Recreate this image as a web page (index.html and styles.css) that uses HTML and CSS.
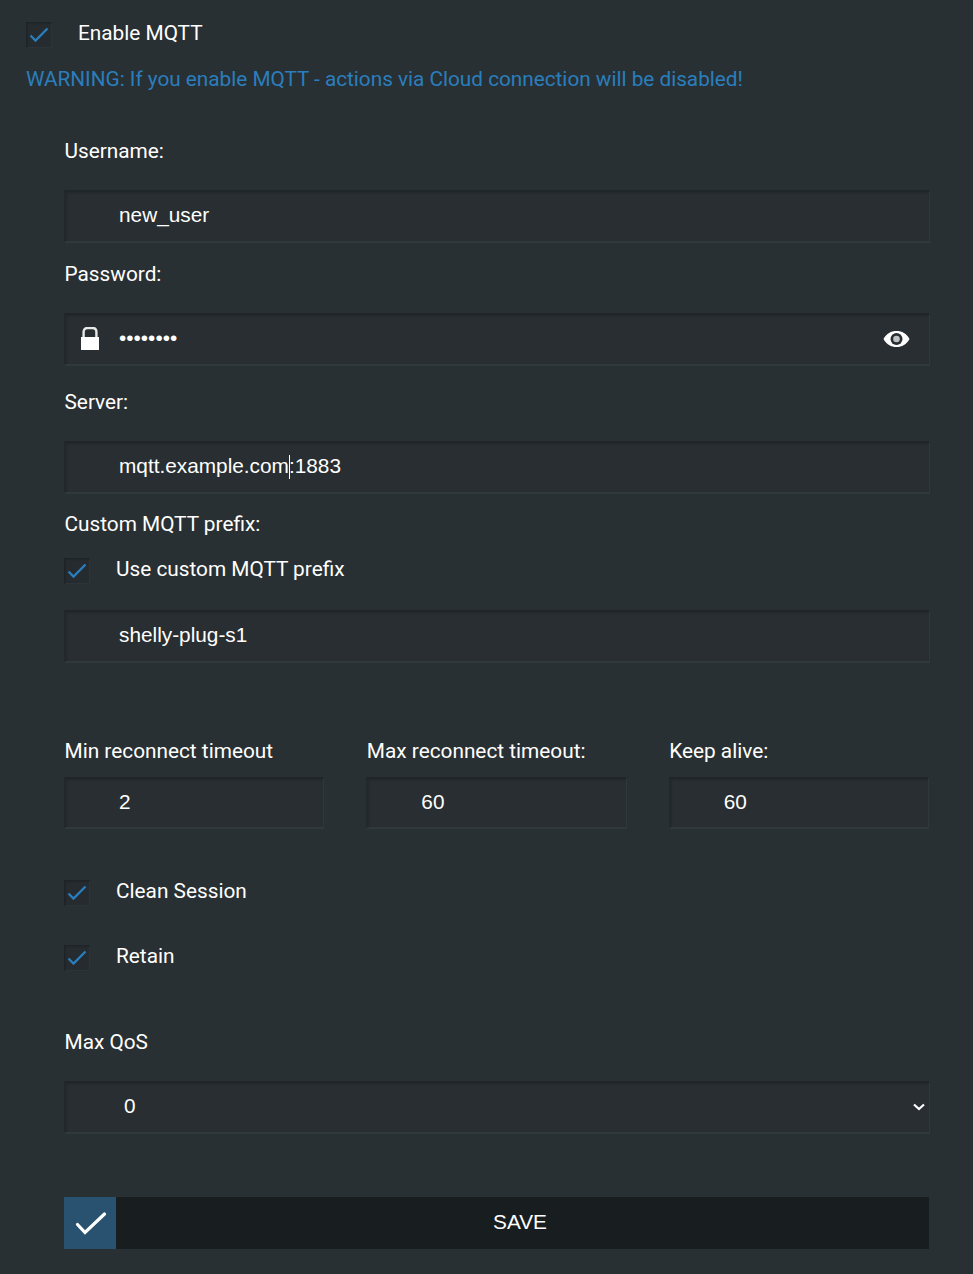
FILE: index.html
```html
<!DOCTYPE html>
<html lang="en">
<head>
<meta charset="utf-8">
<title>MQTT</title>
<link rel="stylesheet" href="styles.css">
</head>
<body>
<svg class="defs" width="0" height="0" aria-hidden="true">
  <symbol id="tick" viewBox="0 0 26 26"><path d="M4.500 13.500 L9.500 18.500 L21.500 6.500" fill="none" stroke="#2a7ebd" stroke-width="2.300"/></symbol>
</svg>
<main class="page">
  <div class="check-row top">
    <span class="box"><svg width="26" height="26"><use href="#tick"/></svg></span>
    <span class="check-text">Enable MQTT</span>
  </div>
  <p class="warning">WARNING: If you enable MQTT - actions via Cloud connection will be disabled!</p>

  <form class="form">
    <div class="label first">Username:</div>
    <div class="field"><span class="value">new_user</span></div>

    <div class="label l-pass">Password:</div>
    <div class="field">
      <svg class="lock" width="20" height="24" viewBox="0 0 20 24"><path d="M3.600 11V5C3.600 2.500 5 1 7.500 1H12.500C15 1 16.400 2.500 16.400 5V11" fill="none" stroke="#e8e8e8" stroke-width="2.400"/><rect x="1" y="10" width="18" height="13" fill="#fff"/></svg>
      <span class="value">••••••••</span>
      <svg class="eye" width="27" height="18" viewBox="0 0 26 18"><path d="M0 9C3 3.500 7.500 1 13 1S23 3.500 26 9C23 14.500 18.500 17 13 17S3 14.500 0 9Z" fill="#fff"/><circle cx="13" cy="9" r="6" fill="#293033"/><circle cx="13" cy="9" r="3.300" fill="#fff" opacity=".7"/></svg>
    </div>

    <div class="label l-server">Server:</div>
    <div class="field"><span class="value">mqtt.example.com<i class="caret"></i>:1883</span></div>

    <div class="label l-custom">Custom MQTT prefix:</div>
    <div class="check-row prefix">
      <span class="box"><svg width="26" height="26"><use href="#tick"/></svg></span>
      <span class="check-text">Use custom MQTT prefix</span>
    </div>
    <div class="field"><span class="value">shelly-plug-s1</span></div>

    <div class="triple">
      <div class="col"><div class="label">Min reconnect timeout</div><div class="field"><span class="value">2</span></div></div>
      <div class="col"><div class="label">Max reconnect timeout:</div><div class="field"><span class="value">60</span></div></div>
      <div class="col"><div class="label">Keep alive:</div><div class="field"><span class="value">60</span></div></div>
    </div>

    <div class="check-row clean">
      <span class="box"><svg width="26" height="26"><use href="#tick"/></svg></span>
      <span class="check-text">Clean Session</span>
    </div>
    <div class="check-row retain">
      <span class="box"><svg width="26" height="26"><use href="#tick"/></svg></span>
      <span class="check-text">Retain</span>
    </div>

    <div class="label l-qos">Max QoS</div>
    <div class="field">
      <span class="value select-value">0</span>
      <svg class="chevron" width="12" height="8" viewBox="0 0 12 8"><path d="M1 1.500 L6 6 L11 1.500" fill="none" stroke="#fff" stroke-width="2.200"/></svg>
    </div>

    <div class="save">
      <span class="save-icon"><svg width="52" height="52" viewBox="0 0 52 52"><path d="M13.500 27.500 L21 35.500 L40.500 17" fill="none" stroke="#fff" stroke-width="3.200" stroke-linecap="round"/></svg></span>
      <span class="save-text">SAVE</span>
    </div>
  </form>
</main>
</body>
</html>
```
FILE: styles.css
```css
* { box-sizing: border-box; }
html, body { margin: 0; padding: 0; }
body {
  background: #293033;
  color: #fff;
  font-family: Roboto, "Liberation Sans", sans-serif;
  font-size: 20.8px;
  line-height: 24px;
  height: 1274px;
  overflow: hidden;
}
.defs { position: absolute; }
.page { padding: 22px 43px 0 26px; }
.check-row { display: flex; align-items: center; height: 26px; gap: 26px; }
.check-text { margin-top: -4px; }
.box {
  width: 26px;
  height: 26px;
  flex: none;
  background: #252b2f;
  box-shadow: inset 1px 1px 2px #1c2124, inset -1px -1px 1px #30383c;
}
.box svg { display: block; }
.warning { margin: 19px 0 0; color: #2a7ebd; letter-spacing: -0.027px; }
.form { margin: 0 0 0 38px; }
.label { height: 24px; padding-left: 0.500px; }
.label.first { margin-top: 48px; }
.label.l-pass { margin-top: 19px; }
.label.l-server { margin-top: 24px; }
.label.l-custom { margin-top: 18px; }
.label.l-qos { margin-top: 59px; }
.first + .field { margin-top: 27px; }
.l-pass + .field { margin-top: 27px; }
.l-server + .field { margin-top: 27px; }
.field {
  position: relative;
  display: flex;
  align-items: center;
  height: 53px;
  background: #282e31;
  border-top: 2px solid #1f2528;
  border-left: 2px solid #22282b;
  border-right: 1px solid #30383b;
  border-bottom: 2px solid #32393c;
  box-shadow: inset 1px 1px 2px rgba(0, 0, 0, .14);
  padding: 0 0 3px 53px;
  font-family: "Liberation Sans", Arial, sans-serif;
}
.l-qos + .field { margin-top: 27px; height: 53px; }
.prefix { margin-top: 22px; }
.prefix + .field { margin-top: 26px; }
.value { display: inline-block; }
.caret { display: inline-block; width: 1px; height: 24px; background: #fff; vertical-align: -6px; margin-right: -1px; }
.lock { position: absolute; left: 14px; top: 12px; }
.eye { position: absolute; right: 19px; top: 15px; }
.chevron { position: absolute; right: 4px; top: 20px; }
.select-value { margin-left: 5px; }
.triple {
  display: grid;
  grid-template-columns: repeat(3, 1fr);
  column-gap: 42px;
  margin: 76px 1px 0 0;
}
.triple .field { margin-top: 14px; height: 52px; }
.clean { margin-top: 51px; }
.retain { margin-top: 39px; }
.save {
  display: flex;
  align-items: center;
  height: 52px;
  margin-top: 63px;
  width: 865px;
  background: #181e20;
}
.save-icon { width: 52px; height: 52px; flex: none; background: #28526f; }
.save-icon svg { display: block; }
.save-text { flex: 1; text-align: center; padding: 0 5px 2px 0; font-family: "Liberation Sans", Arial, sans-serif; }
```
